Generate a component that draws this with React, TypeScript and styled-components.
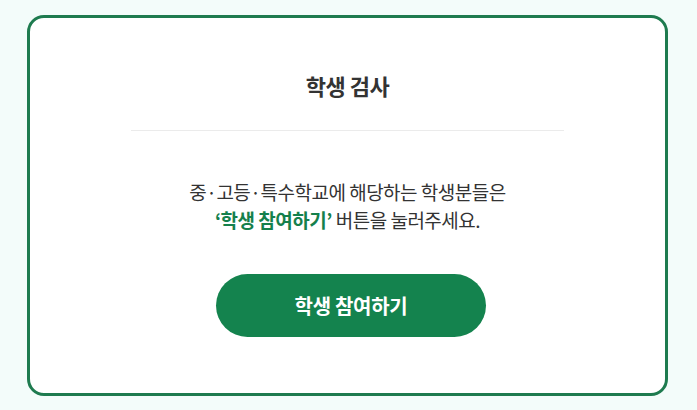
import React from "react";
import styled, { createGlobalStyle } from "styled-components";

const Global = createGlobalStyle`
  html, body { margin: 0; padding: 0; background: #f3fcfa; }
  body { font-family: "Noto Sans CJK KR", "Noto Sans", sans-serif; }
`;

const Page = styled.div`
  width: 697px;
  height: 410px;
  box-sizing: border-box;
  padding: 15px 29px 14px 27px;
  display: flex;
`;

const Card = styled.section`
  flex: 1;
  box-sizing: border-box;
  background: #ffffff;
  border: 3px solid #1e7b4f;
  border-radius: 17px;
  display: flex;
  flex-direction: column;
  align-items: center;
  padding-top: 52px;
`;

const Title = styled.h2`
  margin: 0;
  font-size: 22px;
  font-weight: 700;
  color: #333333;
  line-height: 30px;
  letter-spacing: -0.5px;
`;

const Divider = styled.hr`
  width: 433px;
  border: none;
  border-top: 1px solid #ebebeb;
  margin: 30px 0 0;
`;

const Desc = styled.p`
  margin: 47px 0 0;
  font-size: 19px;
  line-height: 28px;
  color: #333333;
  text-align: center;
  letter-spacing: -0.5px;
`;

const Em = styled.strong`
  color: #15804c;
  font-weight: 700;
`;

const Button = styled.button`
  margin: 40px 0 0 7px;
  width: 270px;
  height: 63px;
  border: none;
  border-radius: 32px;
  background: #14834e;
  color: #ffffff;
  font-family: inherit;
  font-size: 20px;
  font-weight: 700;
  letter-spacing: -0.3px;
  cursor: pointer;
`;

export default function App() {
  return (
    <>
      <Global />
      <Page>
        <Card>
          <Title>학생 검사</Title>
          <Divider />
          <Desc>
            중·고등·특수학교에 해당하는 학생분들은
            <br />
            <Em>‘학생 참여하기’</Em> 버튼을 눌러주세요.
          </Desc>
          <Button>학생 참여하기</Button>
        </Card>
      </Page>
    </>
  );
}
